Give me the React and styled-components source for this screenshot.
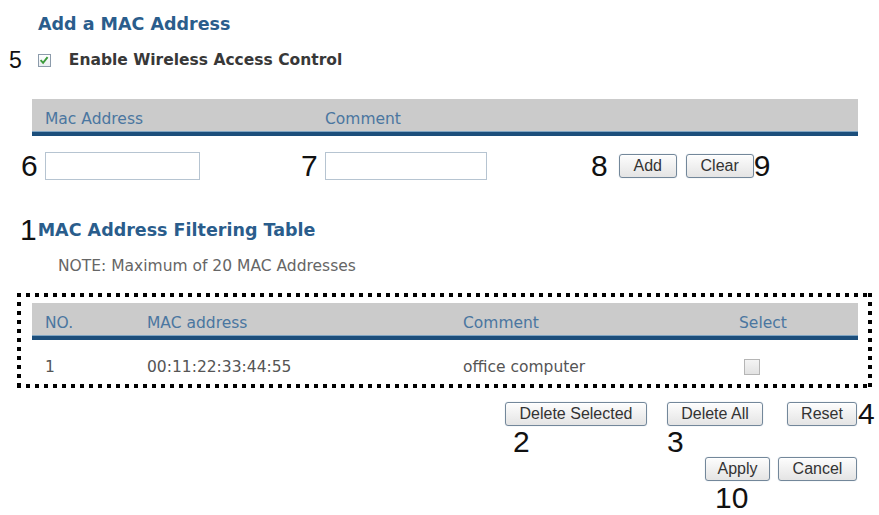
import React from 'react'
import styled, { createGlobalStyle } from 'styled-components'

const Global = createGlobalStyle`
  body {
    margin: 0;
    background: #fff;
    font-family: "DejaVu Sans", Verdana, sans-serif;
  }
`

const Page = styled.div`
  width: 879px;
  padding-top: 13px;
  box-sizing: border-box;
`

const Title = styled.h2`
  margin: 0 0 0 ${p => p.$ml || 38}px;
  font-size: 17.5px;
  line-height: 22px;
  font-weight: bold;
  color: #2a5d8c;
`

// big black numbers pasted over the screenshot
const Callout = styled.span`
  display: block;
  font-family: "Liberation Sans", Arial, sans-serif;
  font-size: ${p => p.$size || 30}px;
  line-height: ${p => p.$size || 30}px;
  color: #111;
  margin-left: ${p => p.$ml || 0}px;
  margin-top: ${p => p.$mt || 0}px;
`

const EnableRow = styled.div`
  display: flex;
  align-items: center;
  height: 20px;
  margin-top: 15px;
  padding-left: 9px;
`

const CheckBox = styled.span`
  display: flex;
  align-items: center;
  justify-content: center;
  width: ${p => p.$size || 13}px;
  height: ${p => p.$size || 13}px;
  box-sizing: border-box;
  margin-left: ${p => p.$ml || 0}px;
  border: 1px solid ${p => (p.$muted ? '#b5b5b5' : '#8c9bab')};
  background: ${p => (p.$muted ? 'linear-gradient(#f4f4f4, #e2e2e2)' : 'linear-gradient(#fff, #e9edf0)')};
`

const EnableLabel = styled.span`
  margin-left: 18px;
  font-size: 15.5px;
  line-height: 20px;
  font-weight: bold;
  color: #383838;
`

const HeaderBar = styled.div`
  display: grid;
  grid-template-columns: ${p => p.$cols};
  height: 37px;
  box-sizing: border-box;
  margin: ${p => p.$margin || 0};
  width: ${p => (p.$w ? `${p.$w}px` : 'auto')};
  padding: 8px 13px 0;
  background: #cbcbcb;
  border-bottom: 4px solid #1c4e7b;
  box-shadow: inset 0 -1px 0 #7fa4c2;
  font-size: 15.5px;
  line-height: 24px;
  color: #4a76a0;
`

const EntryRow = styled.div`
  display: grid;
  grid-template-columns: 280px 290px auto;
  align-items: center;
  height: 28px;
  margin-top: 15px;
  padding-left: 21px;
`

const Field = styled.div`
  display: flex;
  align-items: center;
  gap: ${p => p.$gap || 0}px;
`

const TextInput = styled.input`
  width: ${p => p.$w}px;
  height: 28px;
  box-sizing: border-box;
  border: 1px solid #b6c4d1;
  padding: 0 4px;
  background: #fff;
  outline: none;
`

const Button = styled.button`
  width: ${p => p.$w}px;
  height: 24px;
  box-sizing: border-box;
  padding: 0;
  margin-left: ${p => p.$ml || 0}px;
  font-family: "Liberation Sans", Arial, sans-serif;
  font-size: 16px;
  line-height: 22px;
  color: #333;
  border: 1px solid #73879a;
  border-radius: 3px;
  background: linear-gradient(#fdfdfd, #e4e4e4);
  box-shadow: inset 0 1px 0 #fff, 0 0 1px #a9bccd;
`

const SectionHead = styled.div`
  display: flex;
  align-items: center;
  height: 30px;
  margin-top: 35.5px;
  padding-left: 20px;
`

const Note = styled.p`
  margin: 11px 0 0 58px;
  font-size: 15.5px;
  line-height: 20px;
  color: #666;
`

const dots = (dir) =>
  `repeating-linear-gradient(${dir}, #000 0 4px, transparent 4px 9px)`

const DottedBox = styled.div`
  margin: 17.4px 0 0 17px;
  width: 855px;
  box-sizing: border-box;
  padding: 10px 14px 6px 15px;
  background:
    ${dots('to right')} left top / 100% 4px no-repeat,
    ${dots('to right')} left bottom / 100% 4px no-repeat,
    ${dots('to bottom')} left top / 4px 100% no-repeat,
    ${dots('to bottom')} right top / 4px 100% no-repeat;
`

const tableCols = '102px 316px 276px auto'

const DataRow = styled.div`
  display: grid;
  grid-template-columns: ${tableCols};
  align-items: center;
  height: 30px;
  margin-top: 12px;
  padding: 0 13px;
  font-size: 15.5px;
  line-height: 30px;
  color: #555;
`

const ActionRow = styled.div`
  display: flex;
  align-items: flex-start;
  margin-top: ${p => p.$mt || 0}px;
  padding-left: ${p => p.$pl}px;
`

const Slot = styled.div`
  display: flex;
  flex-direction: ${p => (p.$row ? 'row' : 'column')};
  align-items: flex-start;
  margin-left: ${p => p.$ml || 0}px;
`

function Check() {
  return (
    <svg width="10" height="10" viewBox="0 0 10 10">
      <path d="M1.6 5.2 L4.1 7.8 L8.6 2.2" fill="none" stroke="#3a9a3a" strokeWidth="1.9" />
    </svg>
  )
}

export default function App() {
  return (
    <Page>
      <Global />
      <Title>Add a MAC Address</Title>

      <EnableRow>
        <Callout $size={23}>5</Callout>
        <CheckBox $ml={16}>
          <Check />
        </CheckBox>
        <EnableLabel>Enable Wireless Access Control</EnableLabel>
      </EnableRow>

      <HeaderBar $cols="280px auto" $margin="29px 0 0 32px" $w={826}>
        <span>Mac Address</span>
        <span>Comment</span>
      </HeaderBar>

      <EntryRow>
        <Field $gap={7}>
          <Callout>6</Callout>
          <TextInput $w={155} />
        </Field>
        <Field $gap={7}>
          <Callout>7</Callout>
          <TextInput $w={162} />
        </Field>
        <Field>
          <Callout>8</Callout>
          <Button $w={58} $ml={11}>Add</Button>
          <Button $w={68} $ml={9}>Clear</Button>
          <Callout>9</Callout>
        </Field>
      </EntryRow>

      <SectionHead>
        <Callout>1</Callout>
        <Title $ml={1}>MAC Address Filtering Table</Title>
      </SectionHead>

      <Note>NOTE: Maximum of 20 MAC Addresses</Note>

      <DottedBox>
        <HeaderBar $cols={tableCols}>
          <span>NO.</span>
          <span>MAC address</span>
          <span>Comment</span>
          <span>Select</span>
        </HeaderBar>
        <DataRow>
          <span>1</span>
          <span>00:11:22:33:44:55</span>
          <span>office computer</span>
          <CheckBox $size={16} $ml={5} $muted />
        </DataRow>
      </DottedBox>

      <ActionRow $mt={14} $pl={505}>
        <Slot>
          <Button $w={142}>Delete Selected</Button>
          <Callout $ml={8} $mt={1}>2</Callout>
        </Slot>
        <Slot $ml={20}>
          <Button $w={96}>Delete All</Button>
          <Callout $mt={1}>3</Callout>
        </Slot>
        <Slot $ml={24} $row>
          <Button $w={70}>Reset</Button>
          <Callout $ml={1} $mt={-3}>4</Callout>
        </Slot>
      </ActionRow>

      <ActionRow $pl={705}>
        <Slot>
          <Button $w={65}>Apply</Button>
          <Callout $ml={10} $mt={2}>10</Callout>
        </Slot>
        <Button $w={79} $ml={8}>Cancel</Button>
      </ActionRow>
    </Page>
  )
}
